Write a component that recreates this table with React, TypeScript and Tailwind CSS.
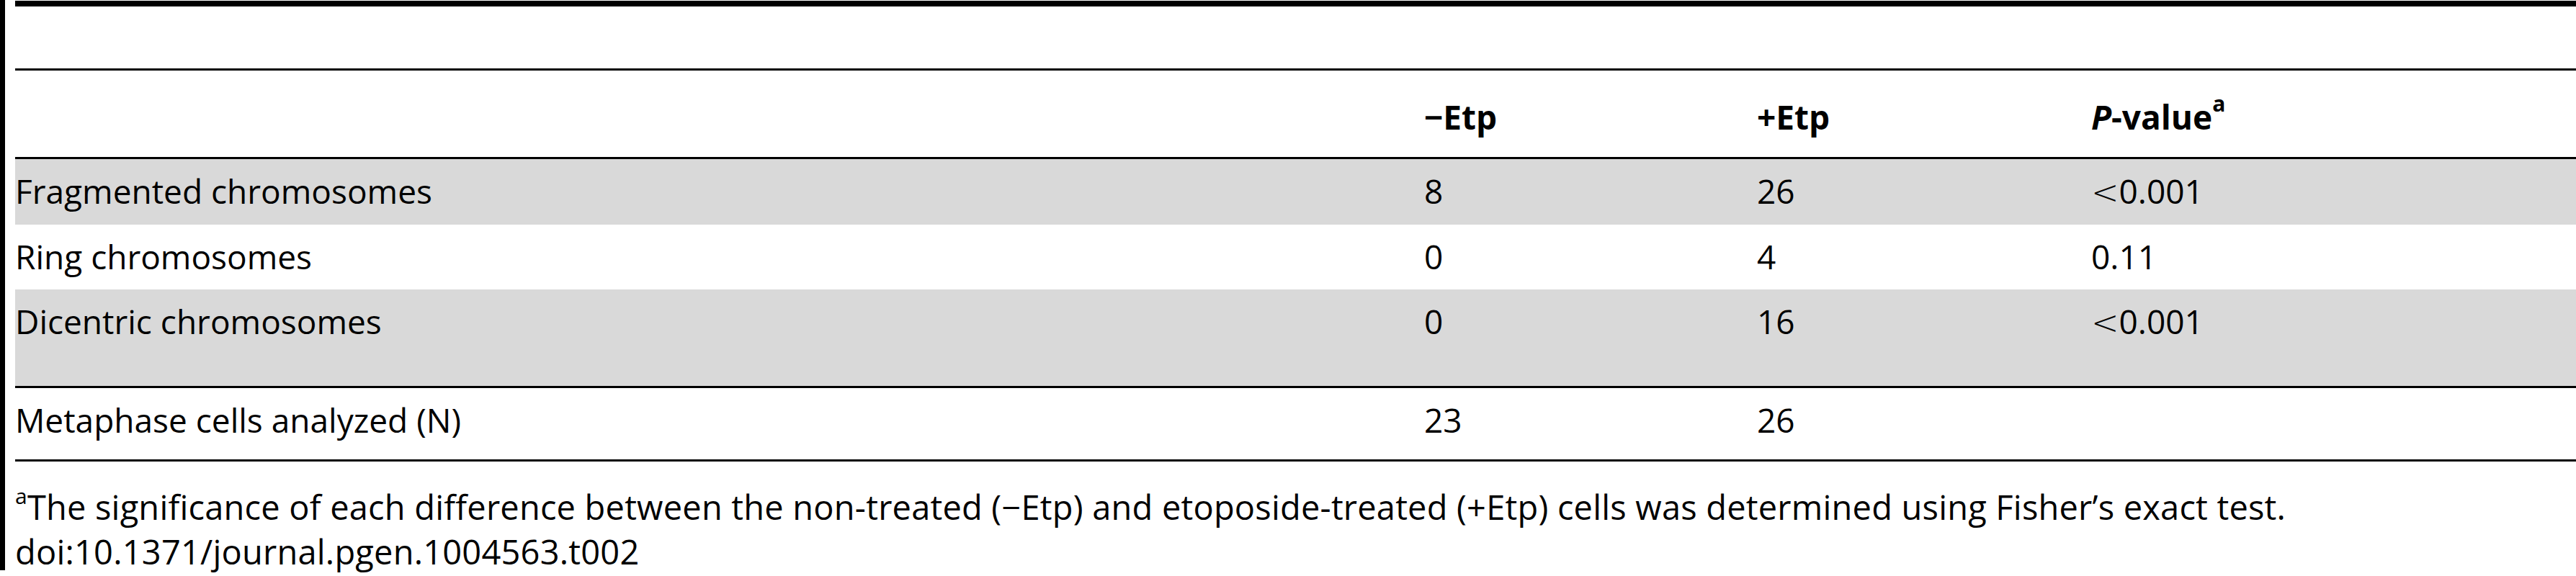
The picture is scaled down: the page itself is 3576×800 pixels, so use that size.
const ROWS = [
  { label: "Fragmented chromosomes", minus: "8", plus: "26", p: "<0.001", row: "h-[91px] bg-[#d9d9d9]" },
  { label: "Ring chromosomes", minus: "0", plus: "4", p: "0.11", row: "h-[90px] bg-white" },
  { label: "Dicentric chromosomes", minus: "0", plus: "16", p: "<0.001", row: "h-[134px] bg-[#d9d9d9]" },
];

const COLS = "grid grid-cols-[1956px_462px_464px_1fr] pt-[21px] leading-[46px]";

function PValue({ value }: { value: string }) {
  // the "<" in the source is a thin math glyph
  if (value.startsWith("<")) {
    return (
      <span>
        <span className="font-['DejaVu_Sans',sans-serif] font-extralight">&lt;</span>
        {value.slice(1)}
      </span>
    );
  }
  return <span>{value}</span>;
}

export default function App() {
  return (
    <div className="flex h-[800px] w-[3576px] bg-white font-['Open_Sans',sans-serif] text-[46px] text-black">
      <div className="h-[792px] w-[7px] shrink-0 bg-black" />
      <div className="ml-[14px] flex-1">
        <div className="mt-[1px] h-[8px] bg-black" />
        <div className="mt-[86px] h-[3px] bg-black" />

        <div className="grid h-[120px] grid-cols-[1956px_462px_464px_1fr] pt-[41px] font-bold leading-[46px]">
          <div />
          <div>−Etp</div>
          <div>+Etp</div>
          <div>
            <i>P</i>-value<sup className="-top-[25px] text-[30px]">a</sup>
          </div>
        </div>
        <div className="h-[3px] bg-black" />

        {ROWS.map((r) => (
          <div key={r.label} className={`${COLS} ${r.row}`}>
            <div>{r.label}</div>
            <div>{r.minus}</div>
            <div>{r.plus}</div>
            <div>
              <PValue value={r.p} />
            </div>
          </div>
        ))}
        <div className="h-[3px] bg-black" />

        <div className={`${COLS} h-[99px]`}>
          <div>Metaphase cells analyzed (N)</div>
          <div>23</div>
          <div>26</div>
          <div />
        </div>
        <div className="h-[3px] bg-black" />

        <div className="pt-[32px] text-[47px] leading-[62px] tracking-[0.2px]">
          <p>
            <sup className="-top-[22px] text-[30px]">a</sup>The significance of each difference between the non-treated (−Etp) and
            etoposide-treated (+Etp) cells was determined using Fisher’s exact test.
          </p>
          <p>doi:10.1371/journal.pgen.1004563.t002</p>
        </div>
      </div>
    </div>
  );
}
